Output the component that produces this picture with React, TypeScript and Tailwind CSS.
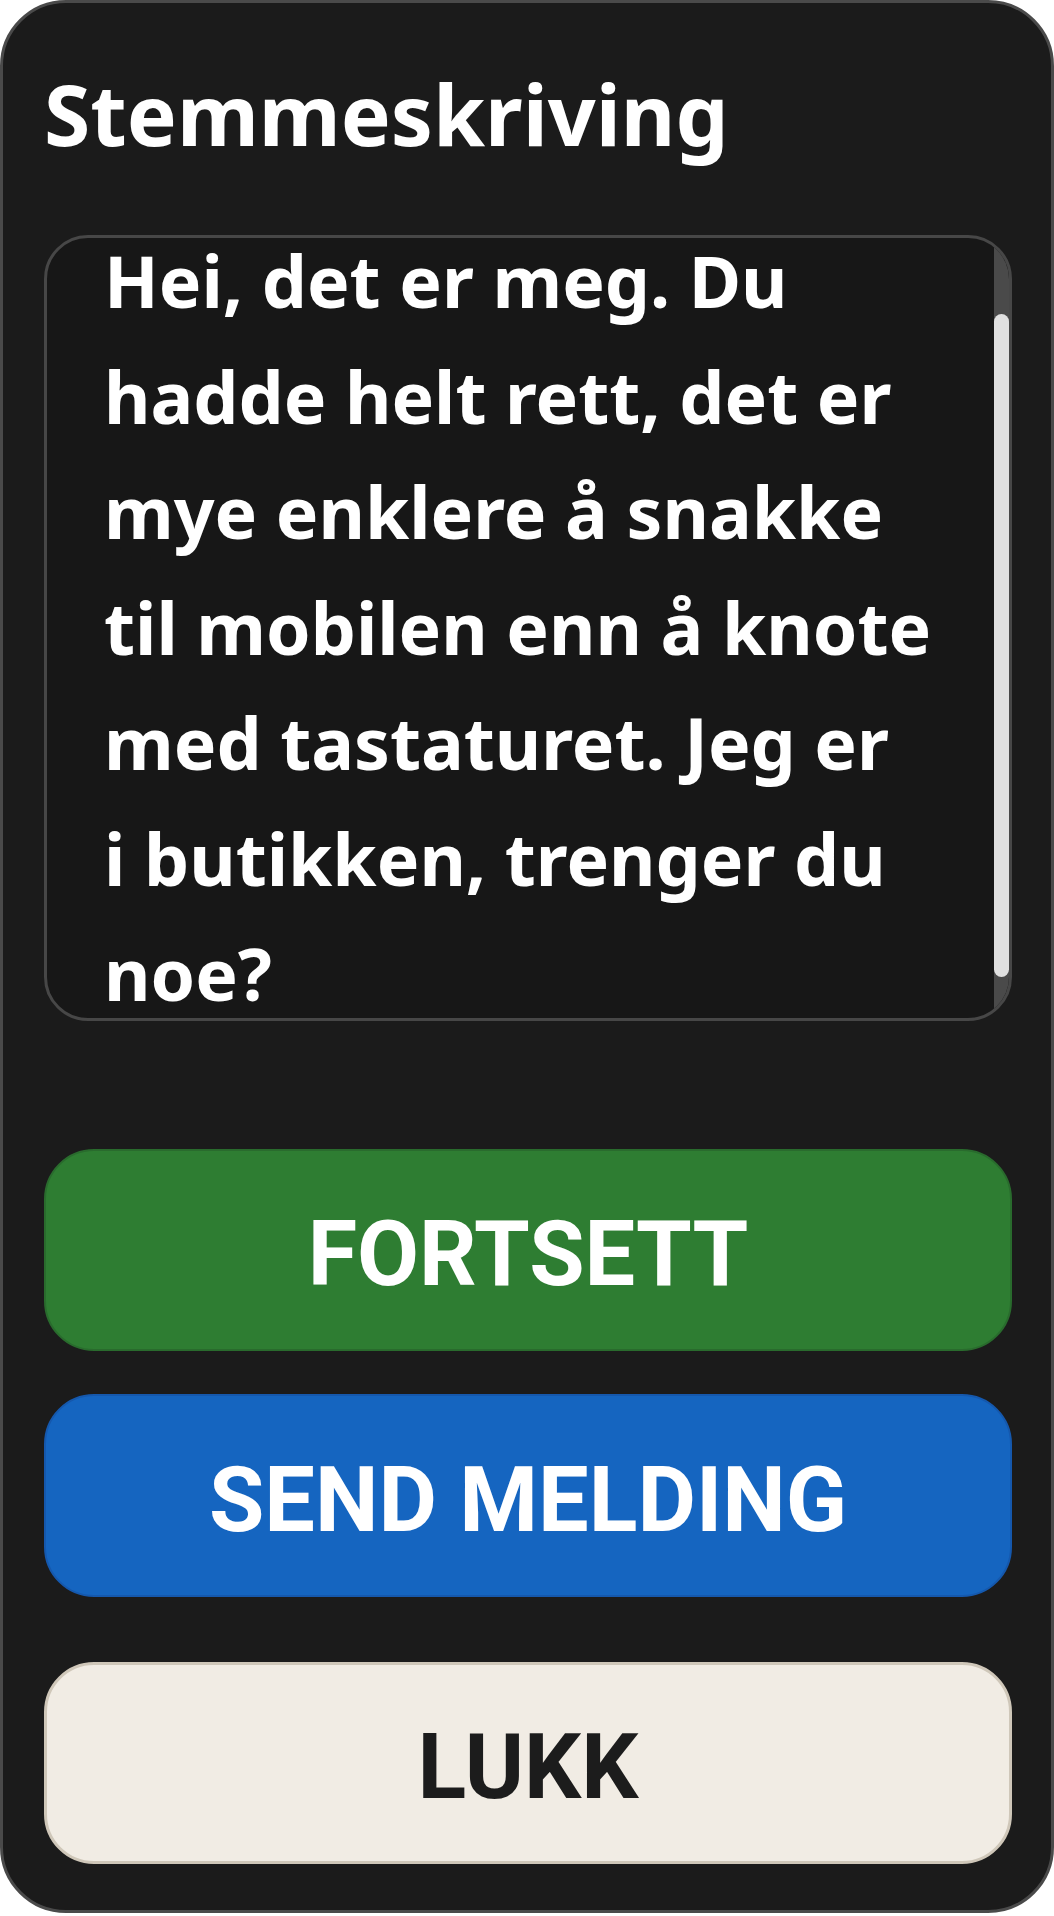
import { useEffect, useRef } from "react";

const TRANSCRIPT = [
  "Hei, det er meg. Du",
  "hadde helt rett, det er",
  "mye enklere å snakke",
  "til mobilen enn å knote",
  "med tastaturet. Jeg er",
  "i butikken, trenger du",
  "noe?",
].join("\n");

export default function App() {
  const scrollRef = useRef<HTMLDivElement>(null);

  useEffect(() => {
    // the transcript is scrolled a little way down, like mid-dictation
    if (scrollRef.current) scrollRef.current.scrollTop = 71;
  }, []);

  return (
    <div className="bg-white w-[1054px] h-[1916px]">
      <div className="flex flex-col w-[1054px] h-[1913px] bg-[#1b1b1b] border-[3px] border-[#4a4a4a] rounded-[66px] pl-[41px] pr-[39px]">
        <h1 className="mt-[69px] text-[84px] leading-[84px] font-bold text-white font-['Noto_Sans',sans-serif]">
          Stemmeskriving
        </h1>

        {/* transcript box - scrollbar drawn by hand since headless hides native ones */}
        <div className="relative mt-[79px] h-[786px] overflow-hidden bg-[#171717] border-[3px] border-[#474747] rounded-[44px]">
          <div
            ref={scrollRef}
            className="h-full overflow-y-auto [scrollbar-width:none] px-[57px] py-[56px] text-white text-[71.5px] leading-[115.5px] font-bold font-['Noto_Sans',sans-serif] whitespace-pre-line"
          >
            {TRANSCRIPT}
          </div>
          <div className="absolute right-0 top-0 bottom-0 w-[15px] bg-[#4a4a4a]">
            <div className="absolute left-0 right-0 top-[76px] h-[663px] rounded-full bg-[#e0e0e0]" />
          </div>
        </div>

        <button className="mt-[128px] h-[202px] pt-[10px] rounded-[50px] bg-[#2e7d32] border-2 border-[#296b2d] text-white text-[90px] font-bold font-['Roboto',sans-serif] leading-none">
          FORTSETT
        </button>
        <button className="mt-[43px] h-[203px] pt-[10px] rounded-[50px] bg-[#1565c0] border-2 border-[#1558ad] text-white text-[90px] font-bold font-['Roboto',sans-serif] leading-none">
          SEND MELDING
        </button>
        <button className="mt-[65px] h-[202px] pt-[10px] rounded-[50px] bg-[#f1ece4] border-[3px] border-[#cfc7b9] text-[#1c1c1c] text-[90px] font-bold font-['Roboto',sans-serif] leading-none">
          LUKK
        </button>
      </div>
    </div>
  );
}
